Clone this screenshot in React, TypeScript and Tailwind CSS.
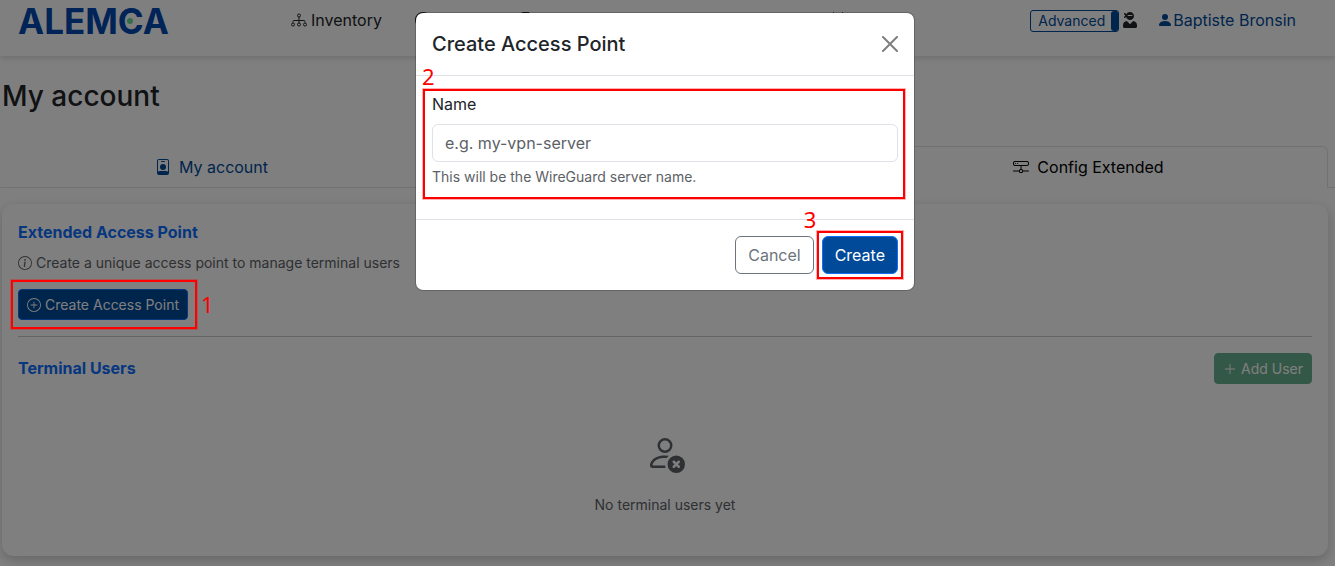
import { useState } from "react";
import {
  BsCalendar,
  BsFileEarmarkFill,
  BsGlobe,
  BsHddNetwork,
  BsInfoCircle,
  BsPersonFill,
  BsPersonX,
  BsPlusCircle,
  BsPlusLg,
} from "react-icons/bs";
import { FaUserNinja } from "react-icons/fa";

function Logo() {
  return (
    <span className="relative block w-[150px] text-[35px] leading-[26px] font-bold text-[#0047b0]">
      ALEMCA
      <span className="absolute top-[10px] left-[109px] size-1.5 rounded-full bg-[#6fd79b]" />
    </span>
  );
}

function InventoryIcon() {
  return (
    <svg viewBox="0 0 16 16" className="size-4" fill="none" stroke="currentColor" aria-hidden="true">
      <circle cx="8" cy="3.500" r="1.500" />
      <circle cx="2" cy="12.500" r="1.500" />
      <circle cx="8" cy="12.500" r="1.500" />
      <circle cx="14" cy="12.500" r="1.500" />
      <path d="M8 5v6M2 10.500V9.500a1 1 0 0 1 1-1h10a1 1 0 0 1 1 1v1" />
    </svg>
  );
}

function BadgeIcon() {
  return (
    <svg viewBox="0 0 16 16" className="size-4" fill="currentColor" aria-hidden="true">
      <path
        fillRule="evenodd"
        d="M4 0h8a2 2 0 0 1 2 2v12a2 2 0 0 1-2 2H4a2 2 0 0 1-2-2V2a2 2 0 0 1 2-2Zm0 1a1 1 0 0 0-1 1v10.800C3.700 11.700 5.300 12 8 12s4.300-.3 5 .8V2a1 1 0 0 0-1-1Z"
      />
      <circle cx="8" cy="8" r="3" />
      <path d="M6.500 2h3a.5.5 0 0 1 0 1h-3a.5.5 0 0 1 0-1Z" />
    </svg>
  );
}

function Header() {
  return (
    <header className="flex h-14 items-start bg-white pt-2 shadow-[0_2px_6px_rgba(0,0,0,0.15)]">
      <a href="#home" className="ml-[18px]">
        <Logo />
      </a>
      <nav className="ml-[123px] flex flex-1 items-center">
        <a href="#inventory" className="flex items-center gap-1">
          <InventoryIcon />
          Inventory
        </a>
        <BsGlobe className="ml-[33px] size-4" aria-hidden="true" />
        <BsFileEarmarkFill className="ml-[88px] size-4" aria-hidden="true" />
        <BsCalendar className="ml-[295px] size-4" aria-hidden="true" />
      </nav>
      <div className="mr-[39px] flex items-center text-[#004a99]">
        <button className="mt-0.5 flex h-[22px] items-stretch overflow-hidden rounded-[3px] border border-current text-sm leading-5">
          <span className="pr-1.5 pl-[7px]">Advanced</span>
          <span className="w-[7px] rounded-l-[3px] bg-current" />
        </button>
        <FaUserNinja className="ml-1 h-4 w-3.5 text-[#212529]" aria-hidden="true" />
        <a href="#profile" className="ml-5 flex items-center">
          <BsPersonFill className="size-4" aria-hidden="true" />
          Baptiste Bronsin
        </a>
      </div>
    </header>
  );
}

function Tabs() {
  return (
    <nav className="mt-[33px] grid grid-cols-[minmax(0,423fr)_minmax(0,426fr)_minmax(0,479fr)_7px] items-stretch">
      <a href="#account" className="flex h-[42px] items-center justify-center gap-2 border border-transparent border-b-[#dee2e6] text-[#004a99]">
        <BadgeIcon />
        My account
      </a>
      <span className="border-b border-[#dee2e6]" />
      <a href="#config" aria-current="page" className="flex items-center justify-center gap-2 rounded-t-md border border-[#dee2e6] border-b-white text-black">
        <BsHddNetwork className="size-4" aria-hidden="true" />
        Config Extended
      </a>
      <span className="border-b border-[#dee2e6]" />
    </nav>
  );
}

function AccountPage() {
  return (
    <main>
      <h1 className="mt-[23px] ml-0.5 text-[28px] leading-[34px] font-medium">My account</h1>
      <Tabs />
      <section className="mx-0.5 mt-4 mr-[7px] h-[352px] rounded-xl bg-white p-4 shadow-[0_4px_12px_rgba(0,0,0,0.2)]">
        <h2 className="leading-6 font-bold text-[#0d6efd]">Extended Access Point</h2>
        <p className="mt-2 flex items-center gap-1 text-sm leading-[21px] text-[#5c6166]">
          <BsInfoCircle className="size-3.5" aria-hidden="true" />
          Create a unique access point to manage terminal users
        </p>
        <button className="mt-4 flex h-[31px] items-center gap-1 rounded-sm border border-[#0d6efd] bg-[#004a99] px-2 text-sm text-white">
          <BsPlusCircle className="size-3.5" aria-hidden="true" />
          Create Access Point
        </button>
        <hr className="my-4 border-[#c7c8c9]" />
        <div className="flex items-start justify-between">
          <h2 className="mt-[3px] leading-6 font-bold text-[#0d6efd]">Terminal Users</h2>
          <button disabled className="flex h-[31px] items-center gap-1 rounded-sm border border-[#198754] bg-[#198754] px-2 text-sm text-white opacity-65">
            <BsPlusLg className="size-3.5" aria-hidden="true" />
            Add User
          </button>
        </div>
        <div className="mt-[49px] flex flex-col items-center text-sm text-[#5c6166]">
          <BsPersonX className="size-10" aria-hidden="true" />
          <p className="mt-[21px] leading-[21px]">No terminal users yet</p>
        </div>
      </section>
    </main>
  );
}

function Marker({ label, frame, text }: { label: string; frame: string; text: string }) {
  return (
    <span className="pointer-events-none">
      <span className={"absolute border-2 border-[#ff0000] shadow-[0_0_0_1px_rgba(255,0,0,0.3)] " + frame} />
      <span className={"absolute font-['Noto_Sans',sans-serif] text-[22px] leading-6 text-[#ff0000] " + text}>{label}</span>
    </span>
  );
}

function Dialog({ onClose }: { onClose: () => void }) {
  const [name, setName] = useState("");
  return (
    <form
      role="dialog"
      aria-modal="true"
      aria-labelledby="dialog-title"
      className="relative w-[500px] rounded-lg border border-black/20 bg-white bg-clip-padding"
      onSubmit={(e) => e.preventDefault()}
    >
      <div className="flex items-center justify-between border-b border-[#dee2e6] p-4">
        <h5 id="dialog-title" className="text-xl leading-[30px] font-medium">Create Access Point</h5>
        <button type="button" aria-label="Close" onClick={onClose} className="flex size-4 items-center justify-center text-black/50">
          <svg viewBox="0 0 16 16" className="size-4 shrink-0" fill="none" stroke="currentColor" strokeWidth="2" strokeLinecap="round" aria-hidden="true">
            <path d="m1 1 14 14M15 1 1 15" />
          </svg>
        </button>
      </div>
      <div className="relative p-4">
        <label htmlFor="server-name" className="block leading-6">Name</label>
        <input
          id="server-name"
          value={name}
          onChange={(e) => setName(e.target.value)}
          placeholder="e.g. my-vpn-server"
          aria-describedby="server-help"
          className="mt-2 block h-[38px] w-full rounded-md border border-[#dee2e6] px-3 placeholder:text-[#5c6166]"
        />
        <p id="server-help" className="mt-1 mb-4 text-sm leading-[21px] text-[#5c6166]">This will be the WireGuard server name.</p>
        <Marker label="2" frame="left-[7px] right-[9px] top-[13px] bottom-5" text="left-1.5 -top-3" />
      </div>
      <div className="flex justify-end gap-2 border-t border-[#dee2e6] p-4">
        <button type="button" onClick={onClose} className="h-[38px] rounded-md border border-[#6c757d] px-3 text-[#6c757d]">Cancel</button>
        <div className="relative">
          <button className="h-[38px] rounded-md border border-[#0d6efd] bg-[#004a99] px-3 text-white">Create</button>
          <Marker label="3" frame="-inset-[5px]" text="-left-[18px] -top-[29px]" />
        </div>
      </div>
    </form>
  );
}

export default function App() {
  const [open, setOpen] = useState(true);
  return (
    <div className="relative min-h-screen overflow-hidden bg-white font-['Inter',sans-serif] text-base text-[#212529]">
      <Header />
      <AccountPage />
      {open && (
        <div className="absolute inset-0 flex items-start justify-center bg-black/50 pt-3 pr-[5px]">
          <Dialog onClose={() => setOpen(false)} />
        </div>
      )}
      <div className="absolute top-[280px] left-[11px] h-[49px] w-[186px]">
        <Marker label="1" frame="inset-0" text="left-[190px] top-3" />
      </div>
    </div>
  );
}
